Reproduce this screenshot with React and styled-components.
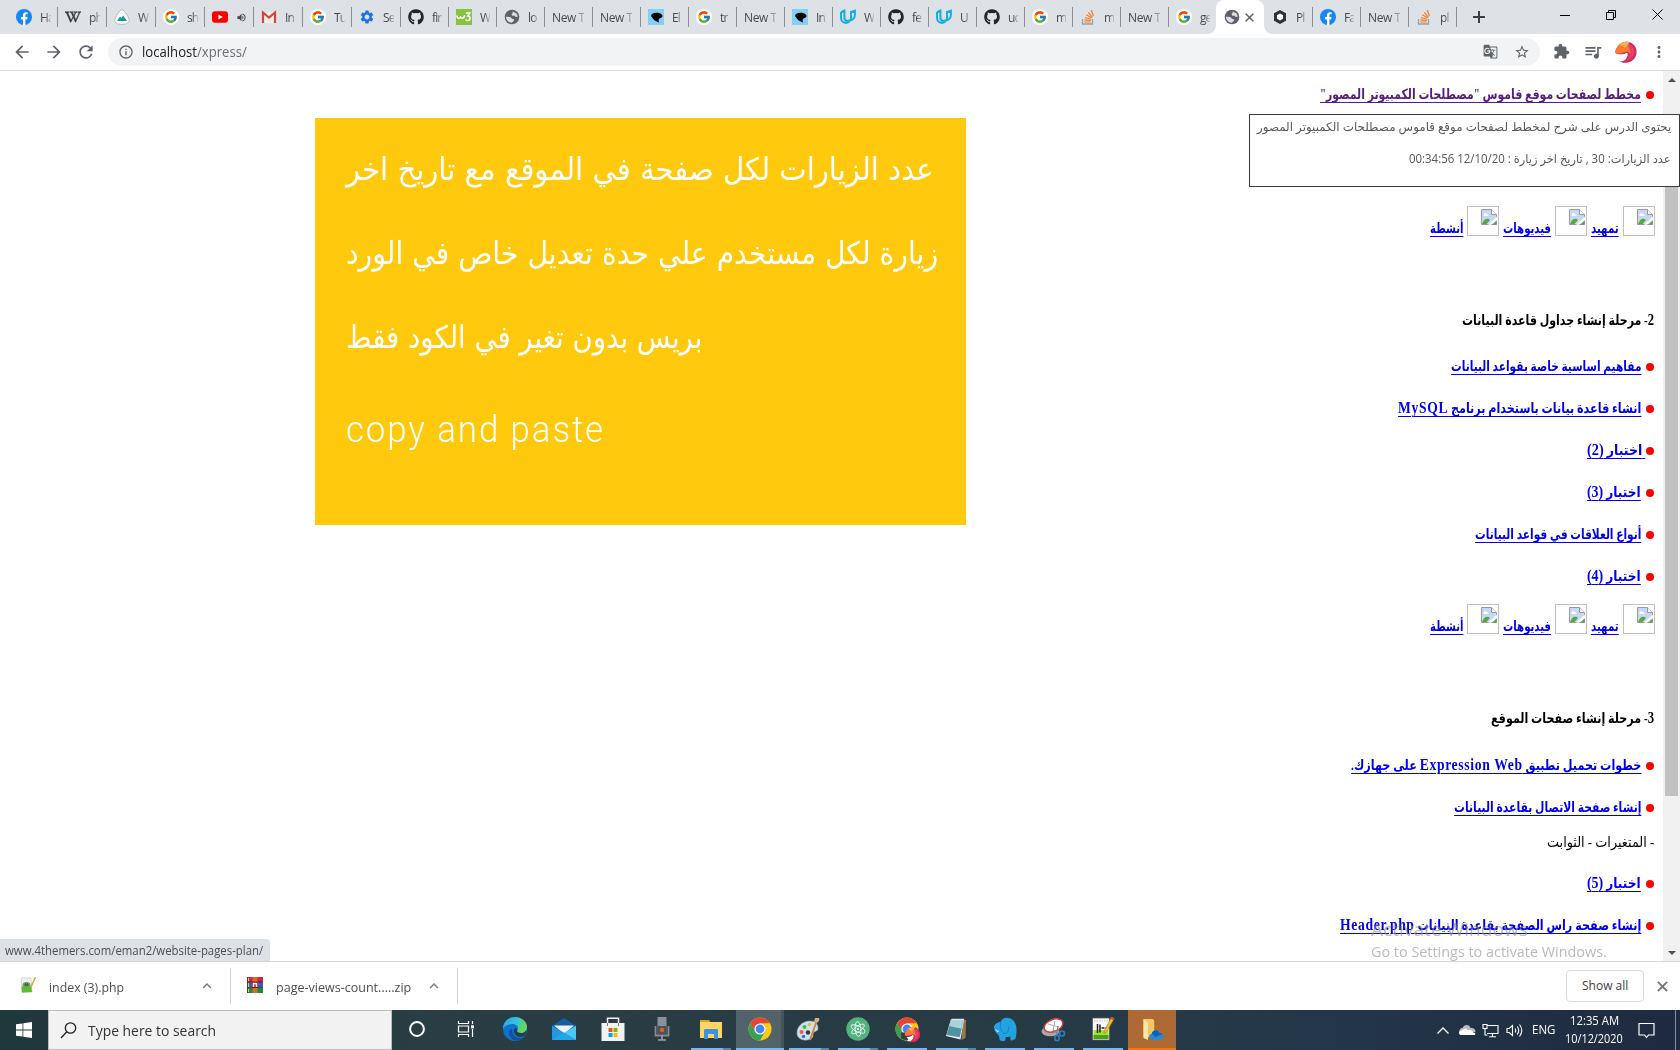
import React, { useLayoutEffect, useRef, useState } from "react";
import styled, { createGlobalStyle, css } from "styled-components";
import { FcGoogle } from "react-icons/fc";
import { FaGithub, FaWikipediaW } from "react-icons/fa";
import {
  MdArrowBack, MdArrowForward, MdRefresh, MdInfoOutline, MdStarBorder, MdExtension,
  MdQueueMusic, MdGTranslate, MdMoreVert, MdSettings,
  MdVolumeUp, MdKeyboardArrowUp,
} from "react-icons/md";

const UI = `"Open Sans", "Noto Sans", "DejaVu Sans", sans-serif`;
const SERIF = `"Liberation Serif", "DejaVu Sans", serif`;

const Global = createGlobalStyle`
  * { box-sizing: border-box; }
  body { margin: 0; background: #fff; overflow: hidden; font-family: ${UI}; }
`;

/* ---------- text fitted to a fixed measure ---------- */
const FitBox = styled.span`
  display: flex;
  flex: none;
  width: ${(p) => p.$w}px;
  direction: ${(p) => (p.$rtl ? "rtl" : "ltr")};
`;
const FitText = styled.span`
  flex: none;
  white-space: pre;
  transform-origin: ${(p) => (p.$rtl ? "right" : "left")} center;
`;
function Fit({ w, rtl, children }) {
  const ref = useRef(null);
  const [scale, setScale] = useState(1);
  useLayoutEffect(() => {
    setScale(w / ref.current.offsetWidth);
  }, [w]);
  return (
    <FitBox $w={w} $rtl={rtl}>
      <FitText ref={ref} $rtl={rtl} style={{ transform: `scaleX(${scale})` }}>{children}</FitText>
    </FitBox>
  );
}

/* ---------- shell ---------- */
const Screen = styled.div`
  position: relative;
  width: 1680px;
  height: 1050px;
  display: flex;
  flex-direction: column;
  overflow: hidden;
  background: #fff;
`;
const TabStrip = styled.div`
  height: 34px;
  flex: none;
  display: flex;
  padding-left: 8px;
  background: #dee1e6;
`;
const divider = css`
  background: linear-gradient(#8a8d91, #8a8d91) left 0 top 7px / 1px 20px no-repeat;
`;
const Tab = styled.div`
  width: ${(p) => p.$w}px;
  height: 34px;
  flex: none;
  display: flex;
  align-items: center;
  padding-left: 8px;
  gap: 8px;
  font-size: 12px;
  color: #45494d;
  ${(p) => !p.$plain && divider}
`;
const TabLabel = styled.span`
  flex: 1;
  min-width: 0;
  margin-right: ${(p) => (p.$long ? 8 : 6)}px;
  overflow: hidden;
  white-space: nowrap;
  letter-spacing: ${(p) => (p.$long ? -0.4 : -0.9)}px;
  mask-image: linear-gradient(90deg, #000 ${(p) => (p.$long ? "65%" : "45%")}, transparent 115%);
`;
const ActiveTab = styled.div`
  width: 48px;
  height: 34px;
  flex: none;
  display: flex;
  align-items: center;
  padding-left: 8px;
  gap: 5px;
  border-radius: 8px 8px 0 0;
  background: #fff;
  color: #5f6368;
  position: relative;
  &::before, &::after {
    content: "";
    position: absolute;
    bottom: 0;
    width: 8px;
    height: 8px;
  }
  &::before { left: -8px; background: radial-gradient(circle at 0 0, transparent 7.5px, #fff 8px); }
  &::after { right: -8px; background: radial-gradient(circle at 100% 0, transparent 7.5px, #fff 8px); }
`;
const IconSlot = styled.span`
  width: ${(p) => p.$s || 16}px;
  height: ${(p) => p.$s || 16}px;
  flex: none;
  display: flex;
  align-items: center;
  justify-content: center;
  color: ${(p) => p.$c || "#5f6368"};
  background: ${(p) => p.$bg || "none"};
  border-radius: ${(p) => (p.$round ? "50%" : "0")};
`;
const NewTab = styled.div`
  width: 46px;
  display: flex;
  align-items: center;
  justify-content: center;
  color: #3c4043;
  ${divider}
`;
const WindowButtons = styled.div`
  margin-left: auto;
  display: flex;
  height: 29px;
`;
const WindowButton = styled.div`
  width: 46px;
  display: flex;
  align-items: center;
  justify-content: center;
`;

const Toolbar = styled.div`
  height: 37px;
  flex: none;
  display: flex;
  align-items: center;
  padding: 0 12px 1px 12px;
  border-bottom: 1px solid #dadce0;
  color: #5f6368;
`;
const NavButtons = styled.div`
  display: flex;
  gap: 12px;
  width: 96px;
`;
const Omnibox = styled.div`
  width: 1432px;
  height: 28px;
  display: flex;
  align-items: center;
  padding: 0 10px 0 10px;
  border-radius: 14px;
  background: #f1f3f4;
  font-size: 14px;
  color: #202124;
`;
const Url = styled.div`
  flex: 1;
  margin-left: 8px;
  & i { font-style: normal; color: #6a6e73; }
`;
const OmniActions = styled.div`
  display: flex;
  align-items: center;
  gap: 16px;
`;
const Actions = styled.div`
  flex: 1;
  display: flex;
  align-items: center;
  justify-content: space-between;
  padding-left: 13px;
`;

/* ---------- page ---------- */
const Viewport = styled.div`
  height: 890px;
  flex: none;
  display: flex;
  overflow: hidden;
`;
const Canvas = styled.div`
  flex: 1;
  padding: 47px 0 0 315px;
`;
const Notice = styled.div`
  width: 651px;
  height: 407px;
  padding: 20px 31px;
  background: #ffc90e;
  color: #fff;
`;
const NoticeLine = styled.div`
  height: 84px;
  font: 31px/62px "DejaVu Sans", sans-serif;
`;
const NoticeLatin = styled.div`
  margin-top: 5px;
  font: 300 36px/70px Roboto, sans-serif;
  letter-spacing: 2px;
`;
const Lessons = styled.div`
  width: 440px;
  padding-right: 9px;
  display: flex;
  flex-direction: column;
  direction: rtl;
`;
const Row = styled.div`
  height: 24px;
  flex: none;
  margin-top: ${(p) => p.$mt}px;
  padding-top: ${(p) => (p.$plain ? 0 : 2)}px;
  display: flex;
  align-items: center;
  font: ${(p) => (p.$plain ? 400 : 700)} 14px/24px ${SERIF};
  color: #000;
`;
const Bullet = styled.span`
  width: 8px;
  height: 8px;
  margin: 0 0 0 ${(p) => p.$gap}px;
  border-radius: 50%;
  background: #f00;
`;
const Link = styled.a`
  display: flex;
  color: ${(p) => (p.$visited ? "#551a8b" : "#0000ee")};
  & ${FitText} {
    text-decoration: underline;
    text-decoration-thickness: 1px;
    text-underline-offset: 3px;
  }
`;
const Latin = styled.span`
  font-size: ${(p) => (p.$wide ? 17 : 16)}px;
  letter-spacing: ${(p) => (p.$wide ? 0.8 : 0.3)}px;
  line-height: 20px;
`;
const MediaRow = styled.div`
  height: 30px;
  flex: none;
  margin: ${(p) => p.$mt}px -1px 0 0;
  display: flex;
  align-items: flex-end;
  gap: 4px;
  font: 700 14px/24px ${SERIF};
  & a { margin-bottom: -5px; }
`;
const Broken = styled.span`
  width: 32px;
  height: 30px;
  padding: 2px 1px;
  border: 1px solid #c0c0c0;
  display: flex;
`;
const Scrollbar = styled.div`
  width: 17px;
  display: flex;
  flex-direction: column;
  align-items: center;
  background: #f1f1f1;
`;
const Arrow = styled.span`
  height: 17px;
  display: flex;
  align-items: center;
`;
const Thumb = styled.span`
  width: 13px;
  height: 676px;
  margin-top: 32px;
  margin-bottom: auto;
  background: #c1c1c1;
`;

/* ---------- overlays ---------- */
const Tooltip = styled.div`
  position: absolute;
  left: 1249px;
  top: 114px;
  width: 431px;
  height: 73px;
  padding: 0 8px 0 0;
  border: 1px solid #3c3c3c;
  background: #fff;
  color: #575757;
  direction: rtl;
  font: 12px/24px "Open Sans", "DejaVu Sans", sans-serif;
`;
const TooltipLine = styled.div`
  height: 32px;
`;
const Watermark = styled.div`
  position: absolute;
  left: 1371px;
  top: 914px;
  color: rgba(140, 140, 140, 0.6);
  font: 19px/30px ${UI};
`;
const WatermarkSmall = styled.div`
  font-size: 15px;
  line-height: 15px;
`;
const StatusBubble = styled.div`
  position: absolute;
  left: 0;
  top: 939px;
  width: 270px;
  height: 22px;
  padding-left: 5px;
  border-radius: 0 4px 0 0;
  background: #dee1e6;
  color: #4a4d51;
  font: 12px/23px ${UI};
`;

/* ---------- downloads ---------- */
const Shelf = styled.div`
  height: 49px;
  flex: none;
  display: flex;
  align-items: center;
  border-top: 1px solid #d5d7da;
  font-size: 13px;
  color: #4a4d51;
`;
const Download = styled.div`
  width: ${(p) => p.$w}px;
  height: 36px;
  display: flex;
  align-items: center;
  padding: 0 14px 0 ${(p) => p.$pl}px;
  border-right: 1px solid #d0d2d5;
`;
const FileIcon = styled.span`
  display: flex;
  padding-bottom: 3px;
`;
const DownloadName = styled.div`
  margin-left: 13px;
  padding-top: 1px;
  flex: 1;
`;
const ShowAll = styled.div`
  width: 78px;
  height: 32px;
  margin: -1px 0 0 auto;
  display: flex;
  align-items: center;
  justify-content: center;
  border: 1px solid #dadce0;
  border-radius: 4px;
  font-size: 12px;
  color: #3c4043;
`;
const ShelfClose = styled.div`
  width: 36px;
  display: flex;
  justify-content: center;
  color: #77797d;
`;

/* ---------- taskbar ---------- */
const Taskbar = styled.div`
  height: 40px;
  flex: none;
  display: flex;
  background: linear-gradient(90deg, #1f383c 0, #2a3d44 25%, #273b45 60%, #24374a 78%, #1e2a40 100%);
  color: #fff;
`;
const Start = styled.div`
  width: 48px;
  display: flex;
  align-items: center;
  justify-content: center;
`;
const Search = styled.div`
  width: 344px;
  display: flex;
  align-items: center;
  padding: 0 0 0 11px;
  gap: 11px;
  border: 1px solid #bdbdbd;
  background: #f2f2f2;
  color: #333;
  font-size: 15px;
`;
const Tasks = styled.div`
  display: flex;
  margin-left: -1px;
  padding-left: 1px;
`;
const Task = styled.div`
  width: 49px;
  height: 40px;
  display: flex;
  align-items: center;
  justify-content: center;
  padding-left: ${(p) => (p.$full ? 1 : 0)}px;
`;
const TaskInner = styled.div`
  width: ${(p) => (p.$full ? "100%" : "40px")};
  height: 40px;
  display: flex;
  align-items: center;
  justify-content: center;
  background: ${(p) => p.$bg || "none"};
  box-shadow: ${(p) => (p.$edge ? "inset -3px 0 0 #46555c" : "none")};
  border-bottom: 2px solid ${(p) => p.$line || "transparent"};
  border-image: ${(p) => (p.$multi ? "linear-gradient(90deg, #76b9ed 79%, #5487b0 79%) 1" : "none")};
`;
const Tray = styled.div`
  margin-left: auto;
  width: 250px;
  display: flex;
  align-items: center;
  font-size: 12px;
`;
const TraySlot = styled.div`
  width: ${(p) => p.$w}px;
  flex: none;
  display: flex;
  flex-direction: column;
  align-items: center;
  line-height: 18px;
  border-right: ${(p) => (p.$end ? "1px solid #8a93a0" : "0")};
  height: ${(p) => (p.$end ? "40px" : "auto")};
`;

/* ---------- icons ---------- */
const Cross = ({ s = 9, w = 1.7 }) => (
  <svg width={s} height={s} viewBox="0 0 10 10" stroke="currentColor" strokeWidth={w}><path d="M.8.800l8.400 8.400M9.200.8L.8 9.200" /></svg>
);
const Plus = () => (
  <svg width="12" height="12" viewBox="0 0 12 12" stroke="currentColor" strokeWidth="2"><path d="M6 0v12M0 6h12" /></svg>
);
const Facebook = () => (
  <svg width="16" height="16" viewBox="0 0 16 16">
    <circle cx="8" cy="8" r="8" fill="#1486f5" />
    <path d="M7 16v-5.600H5V8h2V6.300c0-2 1.200-3.100 3-3.100l1.600.1v2h-1c-.9 0-1.200.6-1.200 1.200V8h2.200l-.4 2.400H9.400V16z" fill="#fff" />
  </svg>
);
const Globe = () => (
  <svg width="16" height="16" viewBox="0 0 16 16">
    <circle cx="8" cy="8" r="7.300" fill="#5f6368" />
    <path d="M8.500 2.200l4.300 2.600.9 3-2 .2-1.200-1.500-2.300.2-.6-1.700L9 3.800zM2 7.800l4.300.2 1.600 1.800 2.200.6-.4 1.700-2 1.700c-3.600-.3-5.600-2.800-5.700-6z" fill="#dee1e6" />
  </svg>
);
const Mountain = () => (
  <svg width="16" height="16" viewBox="0 0 16 16">
    <path d="M8 .8c2.600 0 7.200 8 7.200 10.600 0 2.600-2.400 3.900-7.200 3.900S.8 14 .8 11.400C.8 8.800 5.400.8 8 .8z" fill="#fff" stroke="#b4b8ba" />
    <path d="M3 12l3-4.500L7.500 9 9 6.500 13 12z" fill="#0d9f95" />
  </svg>
);
const YouTube = () => (
  <svg width="16" height="16" viewBox="0 0 16 16">
    <rect x="0" y="2.300" width="16" height="11.400" rx="3" fill="#f00" />
    <path d="M6.400 5.400v5.200L10.800 8z" fill="#fff" />
  </svg>
);
const Gmail = () => (
  <svg width="16" height="16" viewBox="0 0 16 16">
    <path d="M1.500 3h13v11h-13z" fill="#f1eeee" />
    <path d="M2 14V3.500l6 5 6-5V14" fill="none" stroke="#d5443a" strokeWidth="2.200" />
  </svg>
);
const W3 = () => (
  <svg width="16" height="16" viewBox="0 0 16 16">
    <rect width="16" height="16" fill="#86c440" />
    <path d="M1 6.500c0 3.500 3.500 3.500 3.500.5 0 3 3.800 3 4.200-.8M10 4h4l-2.200 3c3.300.2 2.800 4.500-.3 4.500-1 0-1.700-.4-2-1" fill="none" stroke="#fff" strokeWidth="1.500" />
  </svg>
);
const Head = () => (
  <svg width="16" height="16" viewBox="0 0 16 16">
    <rect width="16" height="16" fill="#84d0f2" />
    <path d="M3 7c0-2 2.500-3.500 6-3.300 2.500 0 5.500 1.300 5.500 3.300 0 1.200-1.300 2.200-3 2.400L10.500 11l.5 2.500L6.500 11.500 4.500 9z" fill="#050505" />
  </svg>
);
const Udacity = () => (
  <svg width="16" height="16" viewBox="0 0 16 16" fill="none" stroke="#12afe0" strokeWidth="2">
    <path d="M1 3v5.500c0 3.200 2 5.400 4.800 5.400 1.500 0 2.400-.4 3.400-1M1 3.200l3.400-1.600v7c0 2.400 1.300 3.400 3.200 3.400 4.200 0 7.300-2.600 7.300-6V1.700L11 3v5.500c0 2.300-1.200 3.800-3.400 3.500" />
  </svg>
);
const StackOverflow = () => (
  <svg width="16" height="16" viewBox="0 0 16 16" fill="none">
    <path d="M2.500 10v5h10v-5" stroke="#9da0a3" strokeWidth="1.300" />
    <path d="M4.300 13h6.500M4.400 10.900l6.400.6M5 8.500l6 1.800M6.300 5.700l5.400 3.300M8.300 3.300l4.100 4.800M11.300 1l2 6" stroke="#ef7f22" strokeWidth="1.200" />
  </svg>
);
const Hex = () => (
  <svg width="16" height="16" viewBox="0 0 16 16">
    <path d="M8 1l6 3.200v7.600L8 15l-6-3.200V4.200z" fill="#303236" />
    <path d="M8 4.600l3 1.700v3.400L8 11.400 5 9.700V6.300z" fill="#fff" />
  </svg>
);
const Lion = ({ s = 22 }) => (
  <svg width={s} height={s} viewBox="0 0 22 22">
    <path d="M8 1.500C13-.5 19 2 21 7.500c2 6-1.500 12.500-8 14-4 .8-7 0-9-2 6 0 9.500-3 8.500-7.500-3 1-8 2.500-12 0C0 9 1.500 7 3 5.500z" fill="#d02c60" />
    <path d="M12 3c5 0 8 4 7 9-.6 4-4 7-8 7.500 4-3 5-7 3-11z" fill="#ee3e66" />
    <path d="M2 6.500C4 2 9 0 14 1c-1 2-1.500 4 .5 7 1 2 1 3.500.5 5-1-1.800-2.500-2.500-4.500-2-3 .8-6.500 2.500-10 1C0 10 1 8.500 2 6.500z" fill="#ff7a35" />
    <path d="M5 3.500C8 .8 12 .5 14.500 1.200L10 7z" fill="#ffb056" />
    <path d="M2.500 14c3.500 1.500 6.500 0 9-2.500 1.500 3 0 7-3 8.300-2 .8-4 .6-5-.3l2-1.500z" fill="#fff" />
  </svg>
);
const BrokenImage = () => (
  <svg width="16" height="16" viewBox="0 0 16 16">
    <path d="M.5.500h10l5 5v10H.5z" fill="#c6d8f4" stroke="#9a9a9a" />
    <path d="M2.500 6c0-2 3-2.500 3.500-.8C8 5 8 7 6.500 7h-4z" fill="#fff" />
    <path d="M1 15c2-5 5-6.500 8-4l-3.500 4z" fill="#55a83a" />
    <path d="M10.500.5v5h5" fill="#fff" stroke="#9a9a9a" />
    <path d="M15.800 7.500L7 15.800h3l6-4.500z" fill="#fff" />
    <path d="M15.500 11.500l-4 4h4z" fill="#55a83a" />
  </svg>
);
const NotePlus = () => (
  <svg width="24" height="24" viewBox="0 0 24 24">
    <path d="M1.500 1h17v22h-17z" fill="#fafafa" stroke="#555" strokeWidth=".8" />
    <path d="M2.500 13h15v9h-15z" fill="#a5e02d" />
    <path d="M2.500 18h15v4h-15z" fill="#43a416" />
    <path d="M3 4h14" stroke="#bbb" strokeDasharray="1.500 1" />
    <path d="M6.500 7v9M9 7.500v8" stroke="#222" strokeWidth="1.500" />
    <path d="M10.500 11h3M14.500 11h2" stroke="#222" strokeWidth="1.300" />
    <path d="M20.500 0l2.800 1.500L15.500 15l-2.500 1.500.3-2.700z" fill="#f0bd2c" stroke="#a16b1c" strokeWidth=".5" />
    <path d="M20.500 0l2.800 1.500-1 1.700-2.800-1.600z" fill="#d8433c" />
  </svg>
);
const PhpFile = () => (
  <svg width="16" height="16" viewBox="0 0 16 16">
    <path d="M1 1h10l1 14-10 .5z" fill="#eef0ee" stroke="#c6cac6" strokeWidth=".7" />
    <path d="M1.500 10c3-2 7-2 10 0l.5 5-10 .4z" fill="#5cbf2b" />
    <ellipse cx="6.500" cy="8" rx="4" ry="3" fill="#6ba35b" />
    <path d="M4.500 8h4M5 6.500l1 .7M8 6.500l-1 .7" stroke="#26411f" />
    <path d="M15.500 0L11 10" stroke="#dba83a" strokeWidth="1.500" />
  </svg>
);
const Rar = () => (
  <svg width="16" height="16" viewBox="0 0 16 16">
    <path d="M0 0h16v5H0z" fill="#c9264b" />
    <path d="M0 5h16v5.500H0z" fill="#4a52b8" />
    <path d="M0 10.500h16V16H0z" fill="#198a43" />
    <path d="M5.500 0h5v16h-5z" fill="#df681f" />
    <path d="M5 5h6v6H5z" fill="#b02c35" />
    <path d="M6.500 10V6.500h3V10" stroke="#fff" strokeWidth="1.400" fill="none" />
    <path d="M1.500 1v3M1.500 6v4M1.500 12v3" stroke="#f2cd4a" strokeWidth="1.200" />
    <path d="M0 5h16M0 10.500h16M.3 0v16" stroke="#302438" strokeWidth=".7" />
  </svg>
);
const WindowsLogo = () => (
  <svg width="16" height="16" viewBox="0 0 16 16" fill="#fff">
    <path d="M0 2.300L6.500 1.400v6.200H0zM7.300 1.300L16 0v7.600H7.300zM0 8.400h6.500v6.200L0 13.700zM7.300 8.400H16V16l-8.700-1.200z" />
  </svg>
);
const Magnifier = () => (
  <svg width="17" height="17" viewBox="0 0 17 17" fill="none" stroke="#222" strokeWidth="1.300">
    <circle cx="10.500" cy="6" r="5.200" />
    <path d="M6.800 9.800L1 16" />
  </svg>
);
const Cortana = () => (
  <svg width="18" height="18" viewBox="0 0 18 18">
    <circle cx="9" cy="9" r="6.900" fill="none" stroke="#fff" strokeWidth="2" />
  </svg>
);
const TaskView = () => (
  <svg width="18" height="18" viewBox="0 0 18 18" fill="none" stroke="#fff" strokeWidth="1.200">
    <path d="M1.500 1v2.500h10V1M1.500 17v-2.500h10V17M1.500 6h10v6h-10zM15.500 1v3M15.500 9v8" />
    <path d="M14 5.300h3v3h-3z" fill="#fff" stroke="none" />
  </svg>
);
const Edge = () => (
  <svg width="24" height="24" viewBox="0 0 24 24">
    <defs>
      <linearGradient id="edgeTop" x1="0" y1="0" x2="1" y2="0.300">
        <stop offset="0" stopColor="#2aa6e6" /><stop offset=".55" stopColor="#34c2dd" /><stop offset="1" stopColor="#62da53" />
      </linearGradient>
    </defs>
    <circle cx="12" cy="12" r="12" fill="#0d74ce" />
    <path d="M0 12C0 5 5.500 0 12 0s12 4.500 12 10c0 4-3 6-6 6-2.500 0-4-.8-4-2 0-.7 1-1.300 1-3 0-2.300-2.300-4-5.500-4C5 7 1 9 0 12z" fill="url(#edgeTop)" />
    <path d="M9 11.500c-1 5 3 10 8 9.500 2 0 3.500-.8 4.700-1.800C18 25.500 9 25 6.500 18.500 5.400 15.500 6.300 12.500 9 11.500z" fill="#124f9d" />
    <path d="M14 14c0 1.200 1.500 2 4 2 2 0 4-1 5.200-2.600-.2 2.400-.8 4-1.600 5.400-3 2.200-9 1.200-10.600-3-.7-1.800-.3-3.800 1.400-4.600C14 11 15 12.700 14 14z" fill="#2a3d44" />
  </svg>
);
const Mail = () => (
  <svg width="24" height="24" viewBox="0 0 24 24">
    <path d="M0 9L12 1l12 8v4H0z" fill="#0e5ea9" />
    <path d="M2 8.500h20L12 17z" fill="#f2f2f2" />
    <path d="M0 8.500L24 23H0z" fill="#2396e4" />
    <path d="M24 8.500L12 16l12 7z" fill="#4bc9f6" />
    <path d="M0 23l12-7.500L24 23z" fill="#23a5ea" />
  </svg>
);
const Store = () => (
  <svg width="24" height="24" viewBox="0 0 24 24">
    <path d="M.5 6h23v18H.5z" fill="#f2f2f2" />
    <path d="M6.500 6V1.200h11V6" fill="none" stroke="#f2f2f2" strokeWidth="1.500" />
    <path d="M6.500 6v3M17.500 6v3" stroke="#777" />
    <path d="M7.500 11h4v4h-4z" fill="#f25022" /><path d="M12.500 11h4v4h-4z" fill="#7fba00" />
    <path d="M7.500 16h4v4h-4z" fill="#00a4ef" /><path d="M12.500 16h4v4h-4z" fill="#ffb900" />
  </svg>
);
const Mic = () => (
  <svg width="24" height="24" viewBox="0 0 24 24">
    <path d="M5.500 9v9.500h13V9" fill="none" stroke="#858c91" strokeWidth="1.800" />
    <rect x="7.500" y="0" width="9" height="17" fill="#8a9299" />
    <rect x="7.500" y="9" width="9" height="8" fill="#4b5359" />
    <circle cx="12" cy="13" r="2.200" fill="#ec5a22" />
    <path d="M12 18v5M8 23h8" stroke="#9ba2a6" strokeWidth="1.600" />
  </svg>
);
const Folder = () => (
  <svg width="24" height="24" viewBox="0 0 24 24">
    <path d="M1 3h9l2 3H1z" fill="#e1a51b" />
    <path d="M1 5h22v16H1z" fill="#ffd563" />
    <path d="M5 22v-8.500c0-1 .6-1.500 1.500-1.500h11c1 0 1.500.5 1.500 1.500V22h-4v-5H9v5z" fill="#3b94dc" />
  </svg>
);
const Chrome = ({ children }) => (
  <svg width="24" height="24" viewBox="0 0 24 24" overflow="visible">
    <circle cx="12" cy="12" r="11.500" fill="#fbc916" />
    <path d="M2.040 6.250A11.500 11.500 0 0 1 21.960 6.250H12L7 15z" fill="#e14638" />
    <path d="M2.040 6.250A11.500 11.500 0 0 0 12 23.500L17 14.500H7z" fill="#35a254" />
    <circle cx="12" cy="12" r="5.600" fill="#fff" />
    <circle cx="12" cy="12" r="4.400" fill="#4486f3" />
    {children}
  </svg>
);
const ChromeBadge = () => (
  <Chrome>
    <path d="M6 15.500h12v5c-3 2.800-8 3.300-12 .8z" fill="#3a3d42" />
    <g transform="translate(9.500 9.500)"><Lion s={16} /></g>
  </Chrome>
);
const Paint = () => (
  <svg width="25" height="25" viewBox="0 0 25 25">
    <path d="M1 16C1 9 7 4 14 4c5 0 8 3 8 7 0 3-2 3-4 4-2 1.500 0 4-2 6-2 1.500-5 2.500-8 2-4-.5-7-3-7-7z" fill="#cde2ee" stroke="#8ba9bc" strokeWidth=".6" />
    <circle cx="5.500" cy="15" r="2" fill="#ef5948" /><circle cx="8.500" cy="10" r="2" fill="#4eb846" />
    <circle cx="13.500" cy="7.500" r="1.800" fill="#f0b93a" /><circle cx="12" cy="15.500" r="2.200" fill="#2a3d44" /><circle cx="7.500" cy="19.500" r="1.700" fill="#3a6fd0" />
    <path d="M14 23L20 6" stroke="#d9822f" strokeWidth="1.900" />
    <path d="M18 5l1-4 4 0c1 2-1 5-3 5z" fill="#d7b184" />
  </svg>
);
const Atom = () => (
  <svg width="24" height="24" viewBox="0 0 24 24">
    <circle cx="12" cy="12" r="11.700" fill="#52b27e" />
    <g fill="none" stroke="#e8f7ee" strokeWidth=".9">
      <ellipse cx="12" cy="12" rx="7.500" ry="2.800" transform="rotate(25 12 12)" />
      <ellipse cx="12" cy="12" rx="7.500" ry="2.800" transform="rotate(85 12 12)" />
      <ellipse cx="12" cy="12" rx="7.500" ry="2.800" transform="rotate(145 12 12)" />
    </g>
    <circle cx="12" cy="12" r="1" fill="#fff" />
  </svg>
);
const Notebook = () => (
  <svg width="24" height="24" viewBox="0 0 24 24">
    <path d="M19 2.500l3 .5-.5 18-4 2z" fill="#9a7a43" />
    <path d="M7 2l13 1-3.500 19.500L2 19z" fill="#e4eef0" />
    <path d="M7.500 2.500l12 .8-3.800 17L2.500 18z" fill="#4f93a2" />
    <path d="M7.500 2.500l12 .8-2 8.500L5 9z" fill="#a9d3da" />
    <path d="M8 1.700h12v1.600H7.500z" fill="#dfe5e6" />
  </svg>
);
const Elephant = () => (
  <svg width="24" height="24" viewBox="0 0 24 24">
    <path d="M.8 9.500C2 7 4.500 5 8 4.500 9 1.500 12 .3 15 1c4.500.3 7.500 4 8.300 9 .4 4 .2 8-.8 12l-4.500 1.700c-1-1.500-.8-3-.8-4.500-1.500 1-3 1-4.500.8-.2 1.500 0 2.500-1 4-2 .3-3.500 0-5-1-.3-2-.6-4-1.700-5.500C3 16.500 1 13 .8 9.500z" fill="#20a3e0" />
    <path d="M8 4.500C6.500 9 7.500 14 11 16.500c3.500.5 5-3 4.500-7" fill="none" stroke="#0f86bd" />
    <path d="M2 11.500c1.500 2 3 2.500 4 2.200-.5 2-2.500 1.500-4-2.200z" fill="#fff" />
  </svg>
);
const Snip = () => (
  <svg width="25" height="25" viewBox="0 0 25 25">
    <ellipse cx="9.500" cy="14.500" rx="9" ry="4.800" fill="#a5aaad" />
    <ellipse cx="12.500" cy="8.500" rx="9.800" ry="6" fill="#fff" stroke="#d73e3e" strokeWidth="1.500" transform="rotate(-22 12.500 8.500)" />
    <path d="M7 7l11 3M14 4l-2 10" stroke="#aaa" />
    <path d="M12 13l5 3M17 9l-1.500 9" stroke="#7f878c" strokeWidth="1.200" />
    <circle cx="21" cy="16.500" r="2.500" fill="none" stroke="#2e7ac0" strokeWidth="1.700" />
    <ellipse cx="16" cy="21" rx="2.200" ry="2.700" fill="none" stroke="#2e7ac0" strokeWidth="1.700" />
  </svg>
);
const CloudFolder = () => (
  <svg width="24" height="24" viewBox="0 0 24 24">
    <path d="M3.500 2h9.500l1.200 2v16H3.500z" fill="#f3c866" />
    <path d="M3.500 2l4.500 4v17l-4.500-2z" fill="#ffe5a0" />
    <path d="M13 22.500c-4.500 0-5-5-1.300-5.800C12.500 12.500 18 12 19.500 16c5 0 5 6.500.5 6.500z" fill="#1b8be0" />
    <path d="M11.700 16.700C12.500 12.500 18 12 19.500 16c1 0 2 .3 2.700 1L15.500 20z" fill="#0c63b8" />
  </svg>
);
const Cloud = () => (
  <svg width="18" height="12" viewBox="0 0 18 12">
    <path d="M1.500 8C1 5 3 4 4.500 4 6 0 11.500 0 12.500 4c3-.5 5 1 5 4z" fill="#b6bdc7" />
    <path d="M3 11c-3-.5-2.500-5 1-4.500C6 4 9 4.500 10 6.500c3-1 5 0 5 2 3 0 3 2.500 1 2.500z" fill="#fff" />
  </svg>
);
const Network = () => (
  <svg width="17" height="15" viewBox="0 0 17 15" fill="none" stroke="#fff" strokeWidth="1.100">
    <path d="M5 2.500h11v8H5M10.500 10.500v3M7 13.800h7M1 1.500h4v4H1zM3 5.500V12h2.500" />
  </svg>
);
const Speaker = () => (
  <svg width="17" height="15" viewBox="0 0 17 15" fill="none" stroke="#fff" strokeWidth="1.100">
    <path d="M1 5.500h2.200L6.500 2.500v10l-3.300-3H1zM9 5.500q1.500 2 0 4M11.200 3.500q3 4 0 8M13.500 1.500q4.500 6 0 12" />
  </svg>
);
const Bubble = () => (
  <svg width="17" height="17" viewBox="0 0 17 17" fill="none" stroke="#fff" strokeWidth="1.200">
    <path d="M1 1.500h15v11.500h-5.500L8.500 15.500 6.500 13H1z" />
  </svg>
);
const TrayChevron = () => (
  <svg width="14" height="9" viewBox="0 0 14 9" fill="none" stroke="#fff" strokeWidth="1.300"><path d="M1.500 7.500L7 2l5.500 5.500" /></svg>
);

const GoogleIcon = () => <IconSlot $bg="#fff" $round><FcGoogle size={14} /></IconSlot>;
const favicons = {
  fb: <Facebook />,
  wiki: <FaWikipediaW size={16} color="#35373a" stroke="#35373a" strokeWidth={22} />,
  mountain: <Mountain />,
  google: <GoogleIcon />,
  youtube: <YouTube />,
  gmail: <Gmail />,
  gear: <MdSettings size={16} color="#1a73e8" />,
  github: <FaGithub size={16} color="#202328" />,
  w3: <W3 />,
  globe: <Globe />,
  head: <Head />,
  udacity: <Udacity />,
  so: <StackOverflow />,
  hex: <Hex />,
};
const tabsBefore = [
  ["fb", "Ha"], ["wiki", "ph"], ["mountain", "W"], ["google", "sh"], ["youtube", null], ["gmail", "In"],
  ["google", "Tu"], ["gear", "Se"], ["github", "fin"], ["w3", "W"], ["globe", "lo"], [null, "New T"],
  [null, "New T"], ["head", "El"], ["google", "tr"], [null, "New T"], ["head", "In"], ["udacity", "W"],
  ["github", "fe"], ["udacity", "U"], ["github", "uc"], ["google", "m"], ["so", "m"], [null, "New T"], ["google", "ge"],
];
const tabsAfter = [["hex", "Pl"], ["fb", "Fa"], [null, "New T"], ["so", "pl"]];

function TabItem({ icon, label, w, plain }) {
  return (
    <Tab $w={w} $plain={plain}>
      {icon && <IconSlot>{favicons[icon]}</IconSlot>}
      {label === null ? <MdVolumeUp size={11} /> : <TabLabel $long={!icon}>{label}</TabLabel>}
    </Tab>
  );
}

const Lesson = ({ mt, w, text, visited, gap = 5 }) => (
  <Row $mt={mt}>
    <Bullet $gap={gap} />
    <Link $visited={visited}><Fit w={w} rtl>{text}</Fit></Link>
  </Row>
);
const Media = ({ mt }) => (
  <MediaRow $mt={mt}>
    {[["تمهيد", 28], ["فيديوهات", 48], ["أنشطة", 33]].map(([t, w]) => (
      <React.Fragment key={t}>
        <Broken><BrokenImage /></Broken>
        <Link><Fit w={w} rtl>{t}</Fit></Link>
      </React.Fragment>
    ))}
  </MediaRow>
);

const tasks = [
  { icon: <Cortana /> }, { icon: <TaskView /> }, { icon: <Edge /> }, { icon: <Mail /> }, { icon: <Store /> }, { icon: <Mic /> },
  { icon: <Folder />, line: 1, multi: true },
  { icon: <Chrome />, line: 1, full: true, bg: "#53636a", edge: true },
  { icon: <Paint />, line: 1, multi: true }, { icon: <Atom />, line: 1, multi: true },
  { icon: <ChromeBadge />, line: 1 },
  { icon: <Notebook />, line: 1, multi: true }, { icon: <Elephant />, line: 1 }, { icon: <Snip />, line: 1 },
  { icon: <NotePlus />, line: 1 },
  { icon: <CloudFolder />, full: true, bg: "#ad6a35", color: "#ff7300" },
];

export default function App() {
  return (
    <Screen>
      <Global />
      <TabStrip>
        {tabsBefore.map(([i, l], n) => (
          <TabItem key={n} icon={i} label={l} w={n < 8 ? 49 : 48} plain={n === 0} />
        ))}
        <ActiveTab>
          <Globe />
          <Cross />
        </ActiveTab>
        {tabsAfter.map(([i, l], n) => <TabItem key={n} icon={i} label={l} w={48} plain={n === 0} />)}
        <NewTab><Plus /></NewTab>
        <WindowButtons>
          <WindowButton><svg width="10" height="10"><path d="M0 5.500h10" stroke="#000" /></svg></WindowButton>
          <WindowButton><svg width="10" height="10" fill="none" stroke="#000"><path d="M.5 2.500h7v7h-7zM2.500 2.500v-2h7v7h-2" /></svg></WindowButton>
          <WindowButton><svg width="11" height="11" stroke="#000"><path d="M.5.5l10 10M10.500.5l-10 10" /></svg></WindowButton>
        </WindowButtons>
      </TabStrip>
      <Toolbar>
        <NavButtons><MdArrowBack size={20} /><MdArrowForward size={20} /><MdRefresh size={20} /></NavButtons>
        <Omnibox>
          <MdInfoOutline size={16} color="#5f6368" />
          <Url><Fit w={105}>localhost<i>/xpress/</i></Fit></Url>
          <OmniActions>
            <IconSlot><MdGTranslate size={15} /></IconSlot>
            <IconSlot><MdStarBorder size={18} /></IconSlot>
          </OmniActions>
        </Omnibox>
        <Actions><MdExtension size={17} /><MdQueueMusic size={20} /><Lion /><MdMoreVert size={18} /></Actions>
      </Toolbar>

      <Viewport>
        <Canvas>
          <Notice>
            <NoticeLine><Fit w={588} rtl>عدد الزيارات لكل صفحة في الموقع مع تاريخ اخر</Fit></NoticeLine>
            <NoticeLine><Fit w={592} rtl>زيارة لكل مستخدم علي حدة تعديل خاص في الورد</Fit></NoticeLine>
            <NoticeLine><Fit w={356} rtl>بريس بدون تغير في الكود فقط</Fit></NoticeLine>
            <NoticeLatin><Fit w={259}>copy and paste</Fit></NoticeLatin>
          </Notice>
        </Canvas>
        <Lessons>
          <Lesson mt={11} w={321} visited text={'مخطط لصفحات موقع قاموس "مصطلحات الكمبيوتر المصور"'} />
          <Media mt={100} />
          <Row $mt={72}><Fit w={192} rtl><Latin>2</Latin>- مرحلة إنشاء جداول قاعدة البيانات</Fit></Row>
          <Lesson mt={22} w={190} text="مفاهيم اساسية خاصة بقواعد البيانات" />
          <Lesson mt={18} w={243} text={<>انشاء قاعدة بيانات باستخدام برنامج <Latin $wide>MySQL</Latin></>} />
          <Lesson mt={18} w={58} gap={1} text={<>{"\u00a0"}اختبار <Latin>(2)</Latin></>} />
          <Lesson mt={18} w={54} text={<>اختبار <Latin>(3)</Latin></>} />
          <Lesson mt={18} w={166} text="أنواع العلاقات في قواعد البيانات" />
          <Lesson mt={18} w={54} text={<>اختبار <Latin>(4)</Latin></>} />
          <Media mt={16} />
          <Row $mt={72}><Fit w={163} rtl><Latin>3</Latin>- مرحلة إنشاء صفحات الموقع</Fit></Row>
          <Lesson mt={23} w={290} text={<>خطوات تحميل تطبيق <Latin $wide>Expression Web</Latin> على جهازك.</>} />
          <Lesson mt={18} w={187} text="إنشاء صفحة الاتصال بقاعدة البيانات" />
          <Row $mt={12} $plain><Fit w={107} rtl>- المتغيرات - الثوابت</Fit></Row>
          <Lesson mt={16} w={54} text={<>اختبار <Latin>(5)</Latin></>} />
          <Lesson mt={18} w={301} text={<>إنشاء صفحة راس الصفحة بقاعدة البيانات <Latin $wide>Header.php</Latin></>} />
        </Lessons>
        <Scrollbar>
          <Arrow><svg width="8" height="4"><path d="M0 4l4-4 4 4z" fill="#505050" /></svg></Arrow>
          <Thumb />
          <Arrow><svg width="8" height="4"><path d="M0 0l4 4 4-4z" fill="#505050" /></svg></Arrow>
        </Scrollbar>
      </Viewport>

      <Shelf>
        <Download $w={231} $pl={20}>
          <FileIcon><PhpFile /></FileIcon>
          <DownloadName><Fit w={75}>index (3).php</Fit></DownloadName>
          <MdKeyboardArrowUp size={18} color="#77797d" />
        </Download>
        <Download $w={227} $pl={16}>
          <FileIcon><Rar /></FileIcon>
          <DownloadName><Fit w={135}>page-views-count.....zip</Fit></DownloadName>
          <MdKeyboardArrowUp size={18} color="#77797d" />
        </Download>
        <ShowAll><Fit w={46}>Show all</Fit></ShowAll>
        <ShelfClose><Cross s={11} w={1.8} /></ShelfClose>
      </Shelf>

      <Taskbar>
        <Start><WindowsLogo /></Start>
        <Search><Magnifier /><Fit w={128}>Type here to search</Fit></Search>
        <Tasks>
          {tasks.map((t, n) => (
            <Task key={n} $full={t.full}>
              <TaskInner $full={t.full} $bg={t.bg} $edge={t.edge} $multi={t.multi} $line={t.color || (t.line && "#76b9ed")}>
                {t.icon}
              </TaskInner>
            </Task>
          ))}
        </Tasks>
        <Tray>
          <TraySlot $w={26}><TrayChevron /></TraySlot>
          <TraySlot $w={22}><Cloud /></TraySlot>
          <TraySlot $w={25}><Network /></TraySlot>
          <TraySlot $w={23}><Speaker /></TraySlot>
          <TraySlot $w={35}><Fit w={23}>ENG</Fit></TraySlot>
          <TraySlot $w={66}><Fit w={49}>12:35 AM</Fit><Fit w={58}>10/12/2020</Fit></TraySlot>
          <TraySlot $w={38}><Bubble /></TraySlot>
          <TraySlot $w={11} $end />
        </Tray>
      </Taskbar>

      <Tooltip>
        <TooltipLine><Fit w={414} rtl>يحتوى الدرس على شرح لمخطط لصفحات موقع قاموس مصطلحات الكمبيوتر المصور</Fit></TooltipLine>
        <TooltipLine><Fit w={262} rtl>{"عدد الزيارات: 30 , تاريخ اخر زيارة : \u206612/10/20\u2069 \u206600:34:56\u2069"}</Fit></TooltipLine>
      </Tooltip>
      <Watermark>
        <Fit w={157}>Activate Windows</Fit>
        <WatermarkSmall><Fit w={236}>Go to Settings to activate Windows.</Fit></WatermarkSmall>
      </Watermark>
      <StatusBubble><Fit w={258}>www.4themers.com/eman2/website-pages-plan/</Fit></StatusBubble>
    </Screen>
  );
}
